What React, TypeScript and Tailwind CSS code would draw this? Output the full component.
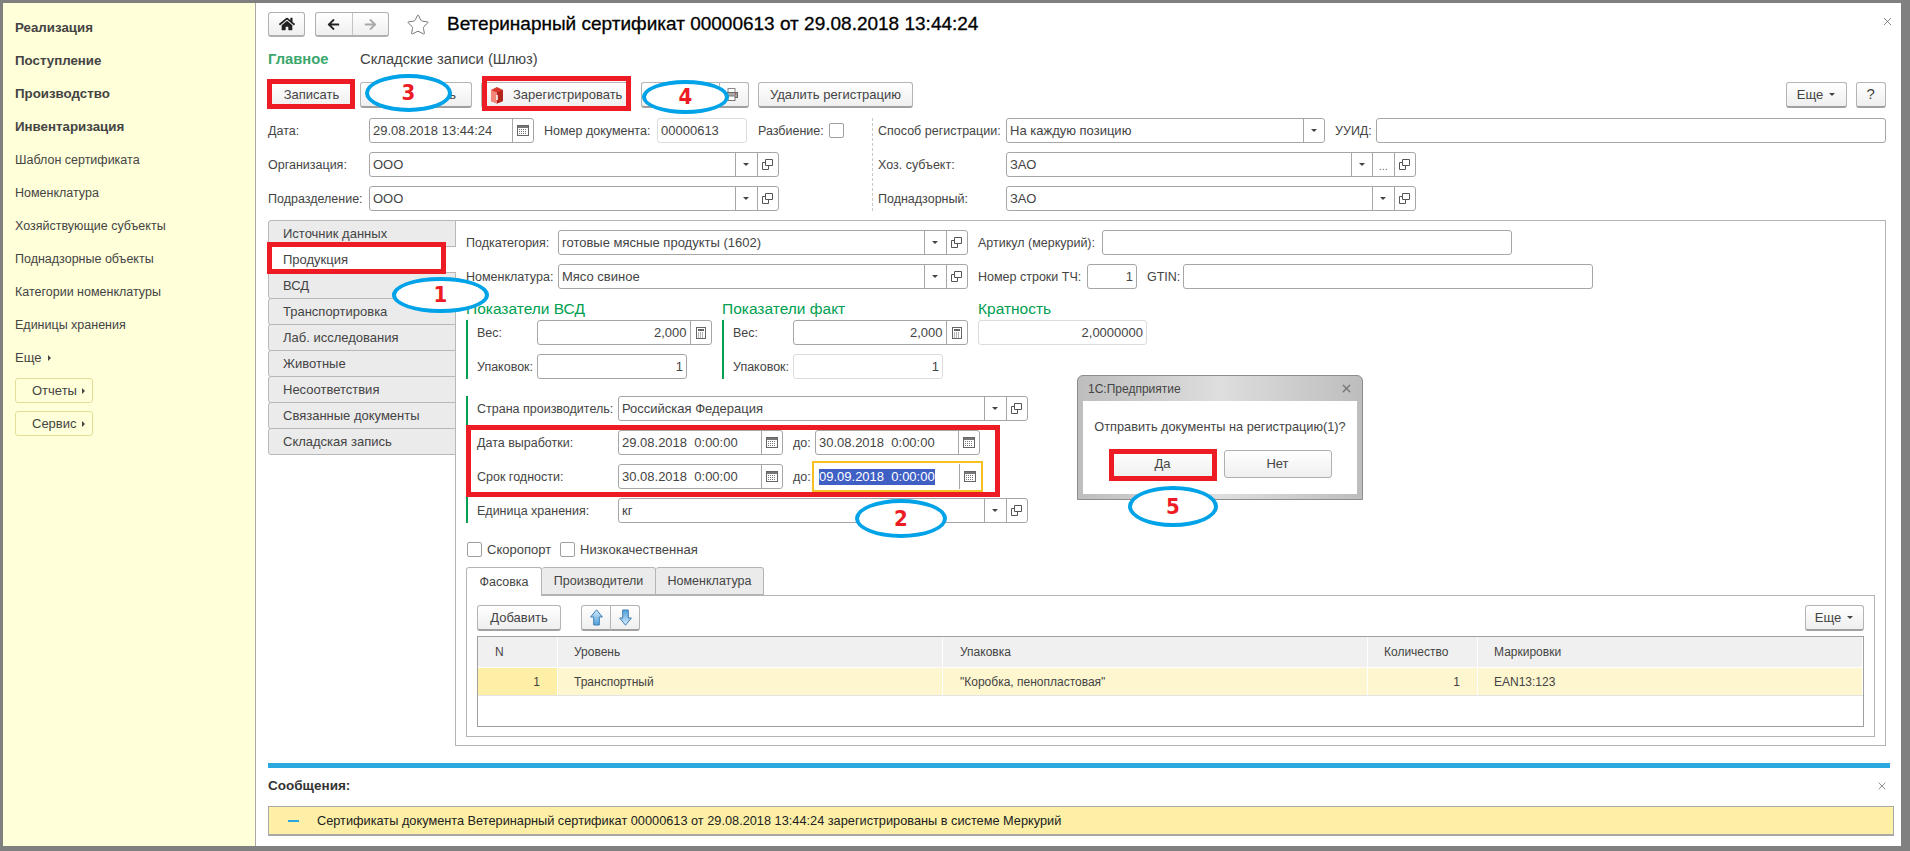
import { FaHome, FaArrowLeft, FaArrowRight } from "react-icons/fa";
import { Star, X } from "lucide-react";
import type { ReactNode } from "react";

const SIDE_BOLD = ["Реализация", "Поступление", "Производство", "Инвентаризация"];
const SIDE_ITEMS = ["Шаблон сертификата", "Номенклатура", "Хозяйствующие субъекты", "Поднадзорные объекты", "Категории номенклатуры", "Единицы хранения"];
const LEFT_TABS = ["Источник данных", "Продукция", "ВСД", "Транспортировка", "Лаб. исследования", "Животные", "Несоответствия", "Связанные документы", "Складская запись"];

type BtnKind = "drop" | "open" | "dots" | "cal" | "calc";

function Caret({ className = "" }: { className?: string }) {
  return <span className={`inline-block w-0 h-0 border-x-[3px] border-x-transparent border-t-[3px] border-t-[#444] ${className}`} />;
}

function Glyph({ kind }: { kind: BtnKind }) {
  if (kind === "drop") return <Caret />;
  if (kind === "dots") return <span className="text-[11px] leading-none text-[#666] mt-[3px]">...</span>;
  if (kind === "open")
    return (
      <svg width="11" height="11" viewBox="0 0 11 11" fill="none" stroke="#555" strokeWidth="1">
        <path d="M3.5 .5h7v6h-7z" />
        <path d="M3.5 3.5h-3v7h6v-4" />
      </svg>
    );
  if (kind === "cal")
    return (
      <svg width="12" height="11" viewBox="0 0 12 11">
        <rect x=".5" y=".5" width="11" height="10" fill="#fff" stroke="#666" />
        <rect x="1" y="1" width="10" height="2" fill="#777" />
        <path d="M2 4.5h8M2 6.5h8M2 8.5h8" stroke="#777" strokeDasharray="1 1" />
      </svg>
    );
  return (
    <svg width="10" height="12" viewBox="0 0 10 12">
      <rect x=".5" y=".5" width="9" height="11" fill="#fff" stroke="#666" />
      <rect x="2" y="2" width="6" height="2" fill="#666" />
      <path d="M2 6h6M2 8h6M2 10h6" stroke="#666" strokeDasharray="1 1" />
    </svg>
  );
}

function Field({ className = "", value, right, light, btns = [] }: { className?: string; value?: string; right?: boolean; light?: boolean; btns?: BtnKind[] }) {
  return (
    <div className={`h-[25px] flex shrink-0 items-stretch rounded-[3px] border bg-white text-[13px] ${light ? "border-[#dcdcdc]" : "border-[#a6a6a6]"} ${className}`}>
      <div className={`flex-1 min-w-0 flex items-center px-[3px] whitespace-pre overflow-hidden ${right ? "justify-end" : ""}`}>{value}</div>
      {btns.map((b, i) => (
        <div key={i} className="w-[21.5px] shrink-0 flex items-center justify-center border-l border-[#a6a6a6]">
          <Glyph kind={b} />
        </div>
      ))}
    </div>
  );
}

function Label({ className = "", children }: { className?: string; children: ReactNode }) {
  return <div className={`shrink-0 whitespace-nowrap pt-px ${className}`}>{children}</div>;
}

function Row({ children }: { children: ReactNode }) {
  return <div className="flex items-center h-[25px]">{children}</div>;
}

function Btn({ className = "", children }: { className?: string; children?: ReactNode }) {
  return (
    <div className={`h-[26px] shrink-0 flex items-center justify-center rounded-[3px] border border-[#b4b4b4] border-b-2 border-b-[#a0a0a0] bg-linear-to-b from-white to-[#efefef] whitespace-nowrap text-[13px] ${className}`}>
      {children}
    </div>
  );
}

function Check({ className = "" }: { className?: string }) {
  return <div className={`w-[15px] h-[15px] shrink-0 rounded-[2px] border border-[#a0a0a0] bg-white ${className}`} />;
}

function Oval({ className, n }: { className: string; n: string }) {
  return (
    <div className={`absolute z-20 flex items-center justify-center rounded-[50%] border-[4px] border-[#00a2e8] bg-white font-['DejaVu_Sans_Condensed','DejaVu_Sans',sans-serif] font-bold text-[22px] leading-none text-[#ed1c24] ${className}`}>
      {n}
    </div>
  );
}

function Frame({ className }: { className: string }) {
  return <div className={`absolute z-20 border-[5px] border-[#ed1c24] ${className}`} />;
}

function ArrowIcon({ down }: { down?: boolean }) {
  return (
    <svg width="13" height="17" viewBox="0 0 13 17" className={down ? "rotate-180" : ""}>
      <defs>
        <linearGradient id="arrowFill" x1="0" y1="0" x2="0" y2="1">
          <stop offset="0" stopColor="#d7ecfb" />
          <stop offset="1" stopColor="#4f9fdc" />
        </linearGradient>
      </defs>
      <path d="M6.5 .8 12.4 8H9.3v8H3.7V8H.6z" fill="url(#arrowFill)" stroke="#3f7fb5" strokeWidth="1" />
    </svg>
  );
}

export default function App() {
  return (
    <div className="relative w-[1910px] h-[851px] overflow-hidden flex bg-[#808080] pt-[3px] pl-[3px] pr-[9px] pb-[5px] font-['Liberation_Sans',Arial,sans-serif] text-[12.5px] text-[#444]">
      {/* section panel */}
      <div className="w-[253px] shrink-0 bg-[#ffffd9] border-r border-[#a8a8a8] pt-[8px]">
        {SIDE_BOLD.map((s) => (
          <div key={s} className="h-[33px] pl-[12px] flex items-center font-bold text-[13.3px]">{s}</div>
        ))}
        {SIDE_ITEMS.map((s) => (
          <div key={s} className="h-[33px] pl-[12px] pt-px flex items-center">{s}</div>
        ))}
        <div className="h-[33px] pl-[12px] flex items-center text-[13px]">
          Еще
          <span className="ml-[7px] w-0 h-0 border-y-[3px] border-y-transparent border-l-[3px] border-l-[#444]" />
        </div>
        {["Отчеты", "Сервис"].map((s, i) => (
          <div key={s} className={`ml-[12px] w-[78px] h-[25px] flex items-center pl-[16px] rounded-[3px] border border-[#e6dc9a] text-[13px] ${i === 0 ? "mt-[4px]" : "mt-[8px]"}`}>
            {s}
            <span className="ml-[5px] w-0 h-0 border-y-[3px] border-y-transparent border-l-[3px] border-l-[#444]" />
          </div>
        ))}
      </div>

      <div className="flex-1 min-w-0 bg-white flex flex-col">
        <div className="pl-[12px] pr-[15.5px]">
          {/* title */}
          <div className="flex items-center h-[25px] mt-[9px] relative">
            <div className="w-[37px] h-[25px] flex items-center justify-center rounded-[3px] border border-[#b0b0b0] border-b-2 bg-linear-to-b from-white to-[#efefef]">
              <FaHome size={16} className="text-[#222]" />
            </div>
            <div className="ml-[10px] w-[74px] h-[25px] flex rounded-[3px] border border-[#b0b0b0] border-b-2 bg-linear-to-b from-white to-[#efefef]">
              <div className="flex-1 flex items-center justify-center border-r border-[#c4c4c4]"><FaArrowLeft size={13} className="text-[#222]" /></div>
              <div className="flex-1 flex items-center justify-center"><FaArrowRight size={13} className="text-[#a8a8a8]" /></div>
            </div>
            <Star size={24} strokeWidth={1} className="ml-[17px] text-[#777]" />
            <div className="ml-[17px] text-[19px] text-black whitespace-nowrap [-webkit-text-stroke:0.3px_#000]">Ветеринарный сертификат 00000613 от 29.08.2018 13:44:24</div>
            <X size={13} strokeWidth={1.2} className="absolute right-[-8px] top-[3px] text-[#444]" />
          </div>

          {/* form tabs */}
          <div className="flex items-center h-[20px] mt-[12px] text-[14.75px]">
            <span className="font-bold text-[#3aa76d] w-[92px]">Главное</span>
            <span>Складские записи (Шлюз)</span>
          </div>

          {/* command bar */}
          <div className="flex mt-[13px]">
            <Btn className="w-[87px]">Записать</Btn>
            <Btn className="w-[112px] ml-[5px] justify-end pr-[15px]">Заполнить</Btn>
            <Btn className="w-[149px] ml-[9px] justify-start pl-[8px]">
              <svg width="14" height="18" viewBox="0 0 14 18" className="mr-[9px]">
                <path d="M1 4 7 1l6 3v11l-6 2.5L1 15z" fill="#d8382b" />
                <path d="M1 4l6 2.5V17.500L1 15z" fill="#f2877a" />
                <path d="M7 6.500V17.500l6-2.500V4z" fill="#b3241b" />
                <path d="M7 9v5" stroke="#fff" strokeWidth="1.500" />
              </svg>
              Зарегистрировать
            </Btn>
            <Btn className="w-[79px] ml-[11px] rounded-r-none" />
            <Btn className="w-[29px] rounded-l-none border-l-0 justify-start pl-[5px]">
              <svg width="13" height="13" viewBox="0 0 13 13">
                <rect x="3" y=".5" width="7" height="4" fill="#fff" stroke="#888" />
                <rect x=".5" y="4.500" width="12" height="5" fill="#aaa" stroke="#666" />
                <rect x="3" y="8" width="7" height="4.500" fill="#fff" stroke="#777" />
                <circle cx="10.500" cy="6" r=".8" fill="#c0392b" />
              </svg>
            </Btn>
            <Btn className="w-[155px] ml-[9px]">Удалить регистрацию</Btn>
            <Btn className="w-[61px] ml-auto">
              Еще<Caret className="ml-[6px]" />
            </Btn>
            <Btn className="w-[29.500px] ml-[9.500px] text-[15px]">?</Btn>
          </div>

          {/* header fields */}
          <div className="flex mt-[10px]">
            <div className="w-[604px] flex flex-col gap-[9px] shrink-0">
              <Row>
                <Label className="w-[101px]">Дата:</Label>
                <Field className="w-[165px]" value="29.08.2018 13:44:24" btns={["cal"]} />
                <Label className="ml-[10px] w-[113px]">Номер документа:</Label>
                <Field className="w-[90px]" value="00000613" light />
                <Label className="ml-[11px] w-[71px]">Разбиение:</Label>
                <Check />
              </Row>
              <Row>
                <Label className="w-[101px]">Организация:</Label>
                <Field className="w-[410px]" value="ООО" btns={["drop", "open"]} />
              </Row>
              <Row>
                <Label className="w-[101px]">Подразделение:</Label>
                <Field className="w-[410px]" value="ООО" btns={["drop", "open"]} />
              </Row>
            </div>
            <div className="border-l border-dashed border-[#c8c8c8]" />
            <div className="ml-[5px] flex-1 flex flex-col gap-[9px]">
              <Row>
                <Label className="w-[128px]">Способ регистрации:</Label>
                <Field className="w-[319px]" value="На каждую позицию" btns={["drop"]} />
                <Label className="ml-[10px] w-[41px]">УУИД:</Label>
                <Field className="flex-1" />
              </Row>
              <Row>
                <Label className="w-[128px]">Хоз. субъект:</Label>
                <Field className="w-[410px]" value="ЗАО" btns={["drop", "dots", "open"]} />
              </Row>
              <Row>
                <Label className="w-[128px]">Поднадзорный:</Label>
                <Field className="w-[410px]" value="ЗАО" btns={["drop", "open"]} />
              </Row>
            </div>
          </div>

          {/* pages */}
          <div className="flex mt-[9px] h-[526px]">
            <div className="w-[188px] shrink-0 -mr-px z-10 text-[13px]">
              {LEFT_TABS.map((s) => (
                <div key={s} className={`h-[27px] pl-[14px] flex items-center rounded-l-[3px] border-y border-l border-[#b8b8b8] -mb-px ${s === "Продукция" ? "bg-white border-r-0" : "bg-[#ebebeb] border-r"}`}>
                  {s}
                </div>
              ))}
            </div>
            <div className="flex-1 min-w-0 border border-[#b4b4b4] pl-[10px] pr-[10px] pt-[9px]">
              <div className="flex flex-col gap-[9px]">
                <Row>
                  <Label className="w-[92px]">Подкатегория:</Label>
                  <Field className="w-[410px]" value="готовые мясные продукты (1602)" btns={["drop", "open"]} />
                  <Label className="ml-[10px] w-[124px]">Артикул (меркурий):</Label>
                  <Field className="w-[410px]" />
                </Row>
                <Row>
                  <Label className="w-[92px]">Номенклатура:</Label>
                  <Field className="w-[410px]" value="Мясо свиное" btns={["drop", "open"]} />
                  <Label className="ml-[10px] w-[109px]">Номер строки ТЧ:</Label>
                  <Field className="w-[50px]" value="1" right />
                  <Label className="ml-[10px] w-[36px]">GTIN:</Label>
                  <Field className="w-[410px]" />
                </Row>
              </div>

              <div className="flex mt-[9px]">
                <div className="w-[256px] shrink-0">
                  <div className="h-[22px] flex items-center text-[15.5px] text-[#00a050]">Показатели ВСД</div>
                  <div className="flex flex-col gap-[9px] border-l-2 border-[#00a050] pl-[9px]">
                    <Row><Label className="w-[60px]">Вес:</Label><Field className="w-[175px]" value="2,000" right btns={["calc"]} /></Row>
                    <Row><Label className="w-[60px]">Упаковок:</Label><Field className="w-[150px]" value="1" right /></Row>
                  </div>
                </div>
                <div className="w-[256px] shrink-0">
                  <div className="h-[22px] flex items-center text-[15.5px] text-[#00a050]">Показатели факт</div>
                  <div className="flex flex-col gap-[9px] border-l-2 border-[#00a050] pl-[9px]">
                    <Row><Label className="w-[60px]">Вес:</Label><Field className="w-[175px]" value="2,000" right btns={["calc"]} /></Row>
                    <Row><Label className="w-[60px]">Упаковок:</Label><Field className="w-[150px]" value="1" right light /></Row>
                  </div>
                </div>
                <div>
                  <div className="h-[22px] flex items-center text-[15.5px] text-[#00a050]">Кратность</div>
                  <Field className="w-[169px]" value="2,0000000" right light />
                </div>
              </div>

              <div className="mt-[17px] flex flex-col gap-[9px] border-l-2 border-[#00a050] pl-[9px]">
                <Row>
                  <Label className="w-[141px]">Страна производитель:</Label>
                  <Field className="w-[410px]" value="Российская Федерация" btns={["drop", "open"]} />
                </Row>
                <Row>
                  <Label className="w-[141px]">Дата выработки:</Label>
                  <Field className="w-[165px]" value="29.08.2018  0:00:00" btns={["cal"]} />
                  <Label className="ml-[10px] w-[22px]">до:</Label>
                  <Field className="w-[165px]" value="30.08.2018  0:00:00" btns={["cal"]} />
                </Row>
                <Row>
                  <Label className="w-[141px]">Срок годности:</Label>
                  <Field className="w-[165px]" value="30.08.2018  0:00:00" btns={["cal"]} />
                  <Label className="ml-[10px] w-[22px]">до:</Label>
                  <div className="w-[165px] h-[25px] shrink-0 flex items-stretch outline-2 outline-offset-[1px] outline-[#f5c020] text-[13px]">
                    <div className="flex-1 flex items-center pl-[4px]">
                      <span className="bg-[#3f5fc4] text-white h-[16px] leading-[16px] whitespace-pre">09.09.2018  0:00:00</span>
                    </div>
                    <div className="w-[21.500px] flex items-center justify-center border-l border-[#a6a6a6]"><Glyph kind="cal" /></div>
                  </div>
                </Row>
                <Row>
                  <Label className="w-[141px]">Единица хранения:</Label>
                  <Field className="w-[410px]" value="кг" btns={["drop", "open"]} />
                </Row>
              </div>

              <div className="flex items-center h-[15px] mt-[19px] ml-px text-[13px]">
                <Check />
                <span className="ml-[5px] w-[73px]">Скоропорт</span>
                <Check />
                <span className="ml-[5px]">Низкокачественная</span>
              </div>

              {/* inner tabs */}
              <div className="flex h-[28px] mt-[10px] text-[12.5px]">
                <div className="w-[76px] flex items-center justify-center rounded-t-[3px] border border-b-0 border-[#b4b4b4] bg-white z-10 -mb-px">Фасовка</div>
                <div className="w-[114px] flex items-center justify-center rounded-t-[3px] border border-l-0 border-[#b4b4b4] bg-[#ebebeb]">Производители</div>
                <div className="w-[108px] flex items-center justify-center rounded-t-[3px] border border-l-0 border-[#b4b4b4] bg-[#ebebeb]">Номенклатура</div>
              </div>
              <div className="border border-[#b4b4b4] px-[10px] pt-[9px] h-[142px]">
                <div className="flex">
                  <Btn className="w-[84px]">Добавить</Btn>
                  <div className="ml-[20px] flex">
                    <Btn className="w-[30px] rounded-r-none"><ArrowIcon /></Btn>
                    <Btn className="w-[29px] rounded-l-none border-l-0"><ArrowIcon down /></Btn>
                  </div>
                  <Btn className="w-[59px] ml-auto">
                    Еще<Caret className="ml-[6px]" />
                  </Btn>
                </div>
                <div className="mt-[5px] h-[91px] border border-[#a0a0a0] text-[12px]">
                  <div className="flex h-[30px] bg-[#f0f0f0] [&>div]:border-r [&>div]:border-white [&>div]:flex [&>div]:items-center">
                    <div className="w-[80px] pl-[17px]">N</div>
                    <div className="w-[385px] pl-[16px]">Уровень</div>
                    <div className="w-[425px] pl-[17px]">Упаковка</div>
                    <div className="w-[110px] pl-[16px]">Количество</div>
                    <div className="flex-1 pl-[16px]">Маркировки</div>
                  </div>
                  <div className="mt-[1px] flex h-[28px] bg-[#fdf6cf] border-b border-[#e4e4e4] [&>div]:border-r [&>div]:border-white [&>div]:flex [&>div]:items-center">
                    <div className="w-[80px] justify-end pr-[17px] bg-[#fdf0a6]">1</div>
                    <div className="w-[385px] pl-[16px]">Транспортный</div>
                    <div className="w-[425px] pl-[17px]">"Коробка, пенопластовая"</div>
                    <div className="w-[110px] justify-end pr-[17px]">1</div>
                    <div className="flex-1 pl-[16px]">EAN13:123</div>
                  </div>
                </div>
              </div>
            </div>
          </div>
        </div>

        {/* messages */}
        <div className="pl-[12px] pr-[11px] mt-[17px]">
          <div className="h-[5px] bg-[#29a8e0]" />
          <div className="flex items-center justify-between h-[20px] mt-[8px]">
            <span className="font-bold text-[13.5px] text-[#333]">Сообщения:</span>
            <X size={12} strokeWidth={1.2} className="mr-[2px] text-[#444]" />
          </div>
          <div className="-mr-[4px] mt-[10px] h-[30px] flex items-center border border-[#a8a8a8] bg-[#fdf0a6] border-b-2 text-[12.75px] text-[#222]">
            <span className="ml-[19px] w-[11px] h-[2px] bg-[#29a8e0]" />
            <span className="ml-[18px]">Сертификаты документа Ветеринарный сертификат 00000613 от 29.08.2018 13:44:24 зарегистрированы в системе Меркурий</span>
          </div>
        </div>
      </div>

      {/* confirmation dialog */}
      <div className="absolute z-10 left-[1077px] top-[375px] w-[286px] h-[125px] rounded-t-[6px] border border-[#8c8c8c] bg-linear-to-r from-[#bdbdbd] via-[#dedede] to-[#bdbdbd] px-[5px] pb-[5px] flex flex-col">
        <div className="h-[25px] flex items-center justify-between text-[12px] text-[#444]">
          <span className="ml-[5px]">1С:Предприятие</span>
          <X size={13} strokeWidth={2.5} className="mr-[4px] text-[#777]" />
        </div>
        <div className="flex-1 bg-white flex flex-col items-center text-[12.75px]">
          <div className="mt-[17px] h-[18px] flex items-center">Отправить документы на регистрацию(1)?</div>
          <div className="mt-[14px] flex gap-[7px] text-[13px]">
            <div className="w-[108px] h-[28px] flex items-center justify-center rounded-[3px] border border-[#b0b0b0] bg-linear-to-b from-white to-[#efefef]">Да</div>
            <div className="w-[108px] h-[28px] flex items-center justify-center rounded-[3px] border border-[#b0b0b0] bg-linear-to-b from-white to-[#efefef]">Нет</div>
          </div>
        </div>
      </div>

      {/* annotations drawn on top of the screenshot */}
      <Frame className="left-[267px] top-[79px] w-[88px] h-[30px]" />
      <Frame className="left-[482px] top-[76px] w-[149px] h-[35px]" />
      <Frame className="left-[267px] top-[242px] w-[179px] h-[32px]" />
      <Frame className="left-[466px] top-[425px] w-[534px] h-[72px]" />
      <Frame className="left-[1109px] top-[449px] w-[108px] h-[32px]" />
      <Oval className="left-[365px] top-[74px] w-[87px] h-[38px]" n="3" />
      <Oval className="left-[642px] top-[80px] w-[87px] h-[34px]" n="4" />
      <Oval className="left-[392px] top-[277px] w-[97px] h-[36px]" n="1" />
      <Oval className="left-[855px] top-[499px] w-[92px] h-[39px]" n="2" />
      <Oval className="left-[1128px] top-[486px] w-[90px] h-[41px]" n="5" />
    </div>
  );
}
